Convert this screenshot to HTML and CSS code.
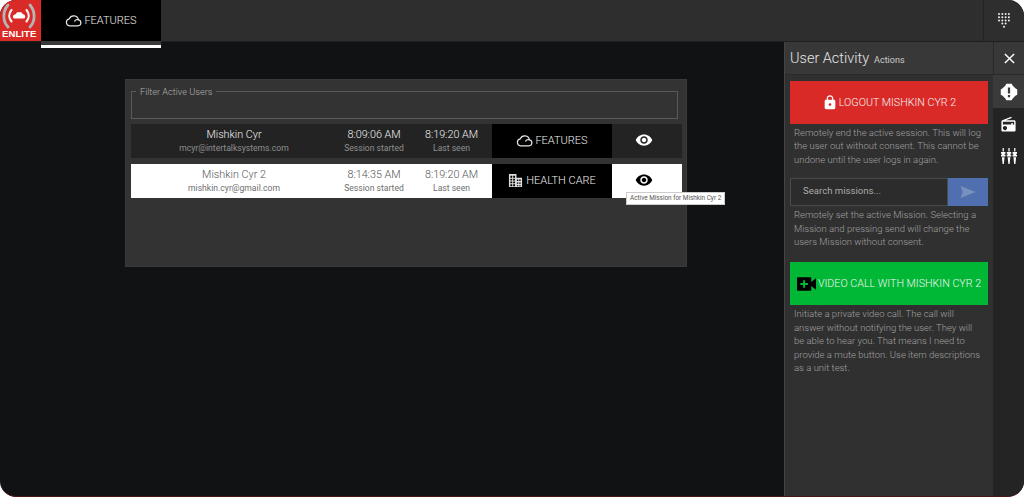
FILE: index.html
```html
<!DOCTYPE html>
<html lang="en">
<head>
<meta charset="utf-8">
<title>Enlite</title>
<link rel="stylesheet" href="styles.css">
</head>
<body>
<div class="app">
  <header class="topbar">
    <div class="logo">
      <svg class="logo-mark" viewBox="0 0 41 29" width="41" height="29">
        <g fill="none" stroke="#b4b4b4" stroke-width="2.8" stroke-linecap="round">
          <path d="M8 5C2.500 11.500 2.500 21 8 27"/>
          <path d="M30 5C35.500 11.500 35.500 21 30 27"/>
        </g>
        <g fill="none" stroke="#f2f2f2" stroke-width="2.200" stroke-linecap="round">
          <path d="M11.500 10C8.500 13.500 8.500 18 11.500 21.500"/>
          <path d="M26.500 10C29.500 13.500 29.500 18 26.500 21.500"/>
        </g>
        <path d="M13 17c0-1.800 1.300-2.500 2.600-2.700l1.400-2h4.300l1.700 2c1.500.2 2.200 1.100 2.200 2.700 0 .9-.8 1.500-1.700 1.500H14.500c-.9 0-1.500-.7-1.500-1.500z" fill="#fff"/>
      </svg>
      <span class="logo-text">ENLITE</span>
    </div>
    <div class="tab">
      <div class="tab-face">
        <svg viewBox="0 0 24 24" width="17" height="17"><path d="M6.500 19.500h11.800a4.300 4.300 0 0 0 .7-8.500A6.800 6.800 0 0 0 6 9.700a4.950 4.950 0 0 0 .5 9.800zM13.500 13.500a4 4 0 0 1 5.500-2.500" fill="none" stroke="#e6e6e6" stroke-width="1.700"/></svg>
        <span>FEATURES</span>
      </div>
      <div class="tab-gap"></div>
      <div class="tab-line"></div>
    </div>
    <div class="top-spacer"></div>
    <div class="dialpad">
      <svg viewBox="0 0 12 15" width="12" height="15" fill="#eee">
        <circle cx="1" cy="1" r="1"/><circle cx="4.300" cy="1" r="1"/><circle cx="7.600" cy="1" r="1"/><circle cx="10.900" cy="1" r="1"/>
        <circle cx="1" cy="4.200" r="1"/><circle cx="4.300" cy="4.200" r="1"/><circle cx="7.600" cy="4.200" r="1"/><circle cx="10.900" cy="4.200" r="1"/>
        <circle cx="1" cy="7.400" r="1"/><circle cx="4.300" cy="7.400" r="1"/><circle cx="7.600" cy="7.400" r="1"/><circle cx="10.900" cy="7.400" r="1"/>
        <circle cx="4.300" cy="10.600" r="1"/><circle cx="7.600" cy="10.600" r="1"/>
        <circle cx="6" cy="13.800" r="1"/>
      </svg>
    </div>
  </header>

  <div class="content">
    <main class="stage">
      <section class="card">
        <fieldset class="filter"><legend>Filter Active Users</legend></fieldset>
        <div class="row row-dark">
          <div class="who"><div class="name">Mishkin Cyr</div><div class="sub">mcyr@intertalksystems.com</div></div>
          <div class="time t1"><div class="name">8:09:06 AM</div><div class="sub">Session started</div></div>
          <div class="time t2"><div class="name">8:19:20 AM</div><div class="sub">Last seen</div></div>
          <div class="mission">
            <svg viewBox="0 0 24 24" width="17" height="17"><path d="M6.500 19.500h11.800a4.300 4.300 0 0 0 .7-8.500A6.800 6.800 0 0 0 6 9.700a4.950 4.950 0 0 0 .5 9.800zM13.500 13.500a4 4 0 0 1 5.500-2.500" fill="none" stroke="#e6e6e6" stroke-width="1.700"/></svg>
            <span>FEATURES</span>
          </div>
          <div class="eye">
            <svg viewBox="0 0 24 24" width="18" height="18"><path d="M12 4.500C7 4.500 2.730 7.610 1 12c1.730 4.390 6 7.500 11 7.500s9.270-3.110 11-7.500c-1.730-4.390-6-7.500-11-7.500zM12 17c-2.760 0-5-2.240-5-5s2.240-5 5-5 5 2.240 5 5-2.240 5-5 5zm0-8c-1.660 0-3 1.340-3 3s1.340 3 3 3 3-1.340 3-3-1.340-3-3-3z" fill="#fff"/></svg>
          </div>
        </div>
        <div class="row row-light">
          <div class="who"><div class="name">Mishkin Cyr 2</div><div class="sub">mishkin.cyr@gmail.com</div></div>
          <div class="time t1"><div class="name">8:14:35 AM</div><div class="sub">Session started</div></div>
          <div class="time t2"><div class="name">8:19:20 AM</div><div class="sub">Last seen</div></div>
          <div class="mission">
            <svg viewBox="0 0 16 16" width="15" height="15"><path fill="#ddd" fill-rule="evenodd" d="M1 1h8v4h6v10H1zM2.500 3v2h2V3zm3 0v2h2V3zm-3 3v2h2V6zm3 0v2h2V6zm4 1v1.500h1.500V7zm2.500 0v1.500h1.500V7zM2.500 9v2h2V9zm3 0v2h2V9zm4 1v1.500h1.500V10zm2.500 0v1.500h1.500V10zM2.500 12v2h2v-2zm3 0v2h2v-2zm4 1v1h1.500v-1zm2.500 0v1h1.500v-1z"/></svg>
            <span>HEALTH CARE</span>
          </div>
          <div class="eye">
            <svg viewBox="0 0 24 24" width="18" height="18"><path d="M12 4.500C7 4.500 2.730 7.610 1 12c1.730 4.390 6 7.500 11 7.500s9.270-3.110 11-7.500c-1.730-4.390-6-7.500-11-7.500zM12 17c-2.760 0-5-2.240-5-5s2.240-5 5-5 5 2.240 5 5-2.240 5-5 5zm0-8c-1.660 0-3 1.340-3 3s1.340 3 3 3 3-1.340 3-3-1.340-3-3-3z" fill="#000"/></svg>
            <div class="tooltip">Active Mission for Mishkin Cyr 2</div>
          </div>
        </div>
      </section>
    </main>

    <aside class="panel">
      <div class="panel-main">
        <div class="panel-head"><span class="panel-title">User Activity</span><span class="panel-sub">Actions</span></div>
        <div class="panel-body">
          <button class="action action-red" type="button">
            <svg viewBox="0 0 24 24" width="16" height="17"><path fill="#fff" d="M18 8h-1V6c0-2.760-2.240-5-5-5S7 3.240 7 6v2H6c-1.100 0-2 .9-2 2v10c0 1.100.9 2 2 2h12c1.100 0 2-.9 2-2V10c0-1.100-.9-2-2-2zm-6 9c-1.100 0-2-.9-2-2s.9-2 2-2 2 .9 2 2-.9 2-2 2zm3.100-9H8.900V6c0-1.710 1.390-3.100 3.100-3.100s3.100 1.390 3.100 3.100v2z"/></svg>
            <span>LOGOUT MISHKIN CYR 2</span>
          </button>
          <p class="desc">Remotely end the active session. This will log the user out without consent. This cannot be undone until the user logs in again.</p>
          <div class="search">
            <span class="search-input">Search missions...</span>
            <span class="send"><svg viewBox="0 0 24 24" width="18" height="18"><path fill="#7890bf" d="M2 4l20 8-20 8 3-8z"/></svg></span>
          </div>
          <p class="desc">Remotely set the active Mission. Selecting a Mission and pressing send will change the users Mission without consent.</p>
          <button class="action action-green" type="button">
            <svg viewBox="0 0 20 14" width="19" height="14"><path fill="#000" fill-rule="evenodd" d="M0 0h15v5l5-4v12l-5-4v5H0zM6.500 3v3h-3v2h3v3h2V8h3V6h-3V3z"/></svg>
            <span>VIDEO CALL WITH MISHKIN CYR 2</span>
          </button>
          <p class="desc">Initiate a private video call. The call will answer without notifying the user. They will be able to hear you. That means I need to provide a mute button. Use item descriptions as a unit test.</p>
        </div>
      </div>
      <nav class="rail">
        <div class="rail-btn rail-close">
          <svg viewBox="0 0 12 12" width="11" height="11"><path d="M1 1l10 10M11 1L1 11" stroke="#fff" stroke-width="1.600" fill="none"/></svg>
        </div>
        <div class="rail-btn rail-on">
          <svg viewBox="0 0 24 24" width="18" height="18"><path fill="#fff" fill-rule="evenodd" d="M8.500 1h7L17 3.500 20.500 7 23 8.500v7L20.500 17 17 20.500 15.500 23h-7L7 20.500 3.500 17 1 15.500v-7L3.500 7 7 3.500zM10.500 6v8h3V6zm0 10v3h3v-3z"/></svg>
        </div>
        <div class="rail-btn">
          <svg viewBox="0 0 24 24" width="17" height="17"><path fill="#fff" d="M3.240 6.150C2.510 6.430 2 7.170 2 8v12c0 1.100.89 2 2 2h16c1.110 0 2-.9 2-2V8c0-1.110-.89-2-2-2H8.300l8.260-3.340L15.880 1 3.240 6.150zM7 20c-1.660 0-3-1.340-3-3s1.340-3 3-3 3 1.340 3 3-1.340 3-3 3zm13-8h-2v-2h-2v2H4V8h16v4z"/></svg>
        </div>
        <div class="rail-btn">
          <svg viewBox="0 0 18 18" width="16" height="16" fill="#fff"><path d="M1.800 0h1.400v4h-1.400zM0 4.500h5v2H4v1H5v2H0v-2h1v-1H0zM1 10.500h3L3.200 18H1.800zM8.300 0h1.400v4H8.300zM6.500 4.500h5v2h-1v1h1v2h-5v-2h1v-1h-1zM7.500 10.500h3L9.700 18H8.300zM14.800 0h1.400v4h-1.400zM13 4.500h5v2h-1v1h1v2h-5v-2h1v-1h-1zM14 10.500h3L16.200 18h-1.400z"/></svg>
        </div>
      </nav>
    </aside>
  </div>
</div>
</body>
</html>
```

FILE: styles.css
```css
* { box-sizing: border-box; }
html, body { margin: 0; height: 100%; background: #fff; }
body { font-family: Roboto, "Liberation Sans", sans-serif; font-weight: 300; overflow: hidden; }

.app {
  width: 1024px; height: 497px;
  display: flex; flex-direction: column;
  background: #111214;
  border-radius: 16px;
  overflow: hidden;
  position: relative;
  border-bottom: 1px solid #4a1512;
}

.topbar { height: 42px; display: flex; align-items: flex-start; background: #2e2e2e; border-bottom: 1px solid #1e1e1e; flex: none; overflow: visible; position: relative; z-index: 2; }
.logo { width: 41px; height: 41px; background: #d92a27; display: flex; flex-direction: column; align-items: flex-start; flex: none; position: relative; }
.logo-mark { display: block; margin-top: 0; }
.logo-text { color: #fff; font: 700 9.500px/11px "Liberation Sans", sans-serif; letter-spacing: .1px; margin: -1px 0 0 2px; }

.tab { width: 120px; flex: none; height: 48px; display: flex; flex-direction: column; }
.tab-face { height: 41px; background: #000; display: flex; align-items: center; justify-content: center; gap: 2px; color: #f0f0f0; font-size: 11px; flex: none; }
.tab-gap { height: 4px; background: #3a3a3a; flex: none; }
.tab-line { height: 3px; background: #fff; flex: none; }

.top-spacer { flex: 1; }
.dialpad { width: 41px; height: 41px; border-left: 1px solid #232323; display: flex; align-items: center; justify-content: center; }

.content { flex: 1; display: flex; min-height: 0; }
.stage { flex: 1; padding: 37px 0 0 125px; min-width: 0; }

.card { width: 562px; height: 188px; background: #333; padding: 6px 9px 0 5px; border: 1px solid #3a3a3a; }
.filter { margin: 0 0 5px; padding: 0 0 0 4px; height: 33px; border: 1px solid #5a5a5a; width: 547px; min-width: 0; }
.filter legend { font-size: 9.200px; color: #b0b0b0; padding: 0 4px; line-height: 11px; font-weight: 300; }

.row { width: 551px; height: 34px; display: flex; align-items: stretch; margin-bottom: 6px; }
.row-dark { background: #232323; color: #ddd; }
.row-light { background: #fff; color: #555; }
.row .who { width: 206px; text-align: center; }
.row .t1 { width: 74px; text-align: center; }
.row .t2 { width: 81px; text-align: center; }
.who, .time { padding-top: 4px; }
.name { font-size: 10.800px; line-height: 14px; font-weight: 300; }
.sub { font-size: 8.600px; line-height: 12px; color: #8f8f8f; font-weight: 400; }
.row-dark .name { color: #f0f0f0; }
.row-light .name { color: #555; }
.row-light .sub { color: #6e6e6e; }
.mission { width: 120px; background: #000; color: #f0f0f0; font-size: 11px; display: flex; align-items: center; justify-content: center; gap: 2px; flex: none; padding-bottom: 2px; }
.row-light .mission { gap: 3px; }
.eye { flex: 1; display: flex; align-items: center; justify-content: center; position: relative; padding: 0 6px 2px 0; }

.tooltip { position: absolute; left: 14px; top: 28px; background: #fff; color: #555; border: 1px solid #ccc; font-size: 6.400px; font-weight: 400; line-height: 11px; padding: 0 3px; white-space: nowrap; z-index: 5; }

.panel { width: 240px; display: flex; flex: none; border-left: 1px solid #444; }
.panel-main { width: 208px; background: #303030; flex: none; display: flex; flex-direction: column; }
.panel-head { height: 33px; background: #383838; border-bottom: 1px solid #2a2a2a; padding: 8px 0 0 5px; display: flex; align-items: baseline; gap: 5px; flex: none; }
.panel-title { font-size: 14.500px; color: #e6e6e6; }
.panel-sub { font-size: 9px; color: #ccc; font-weight: 400; }
.panel-body { padding: 6px 5px 0 5px; flex: 1; }
.action { width: 198px; border: 0; height: 43px; display: flex; align-items: center; justify-content: center; gap: 1px; color: #f4f4f4; font: 300 10.700px Roboto, sans-serif; padding: 0; }
.action-red { background: #d92a27; }
.action-green { background: #00b836; gap: 2px; margin-top: 14px; }
.desc { margin: 2px 0 0; padding: 0 5px 0 4px; font-size: 9.500px; line-height: 13.400px; color: #a0a0a0; width: 198px; }
.search { display: flex; width: 198px; height: 28px; margin-top: 12px; margin-bottom: 2px; }
.search-input { flex: 1; border: 1px solid #4a4a4a; background: #2c2c2c; color: #aaa; font-size: 9.600px; line-height: 24px; padding-left: 12px; font-weight: 400; }
.send { width: 40px; background: #4f6fae; display: flex; align-items: center; justify-content: center; }

.rail { flex: 1; background: #242424; display: flex; flex-direction: column; }
.rail-btn { height: 32px; display: flex; align-items: center; justify-content: center; flex: none; }
.rail-close { height: 33px; background: #383838; border-left: 1px solid #2a2a2a; border-bottom: 1px solid #2a2a2a; }
.rail-on { background: #3a3a3a; height: 33px; }
```
